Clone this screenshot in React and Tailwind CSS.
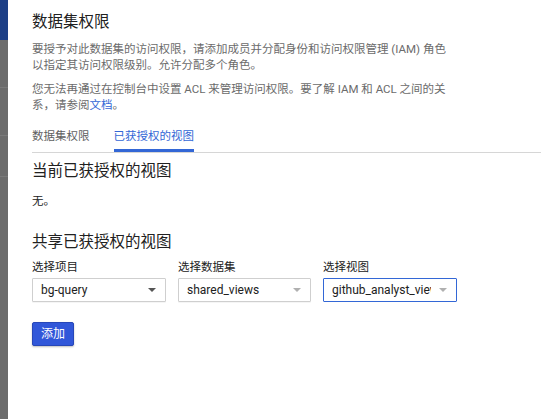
const FONT = { fontFamily: 'Roboto, "Noto Sans CJK SC", sans-serif' }

function Caret({ light }) {
  return (
    <svg width="8" height="4" viewBox="0 0 8 4" className="shrink-0">
      <path d="M0 0h8L4 4z" fill={light ? '#b0b0b0' : '#555555'} />
    </svg>
  )
}

function Select({ value, focused, light, width }) {
  return (
    <div
      className={`h-6 flex items-center pl-2 pr-[9px] gap-2 rounded-[1px] border bg-white ${focused ? 'border-[#3367d6]' : 'border-[#cfcfcf] shadow-[0_1px_0_rgba(0,0,0,0.04)]'} ${width}`}
    >
      <span className="flex-1 overflow-hidden whitespace-nowrap text-[12px] text-[#212121]">{value}</span>
      <Caret light={light} />
    </div>
  )
}

export default function App() {
  return (
    <div className="w-[541px] h-[419px] flex bg-white overflow-hidden" style={FONT}>
      {/* backdrop strip */}
      <div className="w-2 shrink-0 flex flex-col bg-[#6c6c6c]">
        <div className="h-10 bg-[#1d3f86]" />
        <div className="h-[48px] border-b border-[#7a7a7a]" />
        <div className="h-[48px] border-b border-[#7a7a7a]" />
        <div className="h-[41px] border-b border-[#7a7a7a]" />
      </div>

      <div className="flex-1 pl-6 pt-[11px]">
        <h1 className="text-[15.5px] leading-[22px] text-[#212121]">数据集权限</h1>
        <p className="mt-2 text-[11.5px] leading-4 text-[#6b6b6b] whitespace-nowrap">
          要授予对此数据集的访问权限，请添加成员并分配身份和访问权限管理 (IAM) 角色
          <br />
          以指定其访问权限级别。允许分配多个角色。
        </p>
        <p className="mt-2 text-[11.5px] leading-4 text-[#6b6b6b] whitespace-nowrap">
          您无法再通过在控制台中设置 ACL 来管理访问权限。要了解 IAM 和 ACL 之间的关
          <br />
          系，请参阅<span className="text-[#3367d6]">文档</span>。
        </p>

        <div className="mt-[15px] flex gap-6 border-b border-[#d6d6d6] text-[11.5px] leading-4">
          <div className="pb-[5px] border-b-[3px] border-transparent text-[#5f5f5f]">数据集权限</div>
          <div className="pb-[5px] border-b-[3px] border-[#3367d6] text-[#3367d6]">已获授权的视图</div>
        </div>

        <h2 className="mt-[7px] text-[15.5px] leading-[22px] text-[#212121]">当前已获授权的视图</h2>
        <p className="mt-[11px] text-[11.5px] leading-4 text-[#212121]">无。</p>

        <h2 className="mt-[22px] text-[15.5px] leading-[22px] text-[#212121]">共享已获授权的视图</h2>
        <div className="mt-[6px] flex gap-3">
          <div className="flex flex-col gap-[3px]">
            <span className="text-[11.5px] leading-4 text-[#212121]">选择项目</span>
            <Select value="bg-query" width="w-[134px]" />
          </div>
          <div className="flex flex-col gap-[3px]">
            <span className="text-[11.5px] leading-4 text-[#212121]">选择数据集</span>
            <Select value="shared_views" light width="w-[133px]" />
          </div>
          <div className="flex flex-col gap-[3px]">
            <span className="text-[11.5px] leading-4 text-[#212121]">选择视图</span>
            <Select value="github_analyst_view" light focused width="w-[134px]" />
          </div>
        </div>

        <button className="mt-5 h-6 px-2 rounded-[2px] border border-[#2747b8] bg-[#3157d9] text-[12px] text-white shadow-[0_1px_2px_rgba(0,0,0,0.25)]">
          添加
        </button>
      </div>
    </div>
  )
}
